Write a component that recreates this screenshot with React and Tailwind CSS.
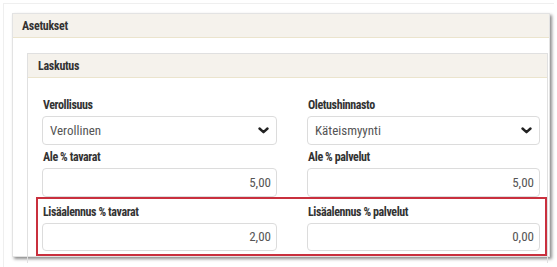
import React from 'react';

const font = '[font-family:"Roboto_Condensed","DejaVu_Sans_Condensed","Liberation_Sans_Narrow",Roboto,sans-serif]';

const Chevron = () => (
  <svg width="11" height="7" viewBox="0 0 11 7" className="shrink-0">
    <path d="M1.5 1.5 L5.5 5.2 L9.5 1.5" fill="none" stroke="#222" strokeWidth="2.4" strokeLinecap="round" strokeLinejoin="round" />
  </svg>
);

const Label = ({ children }) => (
  <div className="h-[16px] leading-[16px] text-[12px] font-bold text-[#333] pl-[1px] mb-[3px] tracking-[-0.4px] [font-stretch:condensed]">{children}</div>
);

const Select = ({ value }) => (
  <div className="h-[29px] border border-[#dcdcdc] rounded-[4px] bg-white flex items-center justify-between pl-[7px] pr-[7px] text-[13px] text-[#555] [font-stretch:condensed]">
    <span>{value}</span>
    <Chevron />
  </div>
);

const Input = ({ value, h = 'h-[29px]' }) => (
  <div className={`${h} border border-[#dcdcdc] rounded-[4px] bg-white flex items-center justify-end pr-[5px] text-[13px] text-[#555] [font-stretch:condensed]`}>
    {value}
  </div>
);

export default function App() {
  return (
    <div className={`w-[557px] h-[267px] bg-white overflow-hidden pt-[3px] pl-[3px] ${font}`}>
      <div className="w-[551px] h-[264px] border-l border-t border-[#efefef] pl-[8px] pt-[9px]">
        <div className="w-[538px] h-[244px] bg-white border border-[#e3e3e3] shadow-[2px_2px_3px_rgba(0,0,0,0.45)]">
          <div className="h-[24px] bg-[#f5f2ec] border-b border-[#ebe4cd] pl-[9px] flex items-center text-[12px] font-bold text-[#333] tracking-[-0.3px] [font-stretch:condensed]">
            Asetukset
          </div>
          <div className="pl-[14px] pt-[15px] pr-[1px]">
            <div className="h-[210px] border border-[#e0e0e0] border-b-0">
              <div className="h-[24px] bg-[#f5f2ec] border-b border-[#ebe4cd] pl-[10px] flex items-center text-[12px] font-bold text-[#333] tracking-[-0.3px] [font-stretch:condensed]">
                Laskutus
              </div>
              <div className="pl-[14px] pt-[19px]">
                <div className="grid grid-cols-[235px_233px] gap-x-[30px]">
                  <div>
                    <Label>Verollisuus</Label>
                    <Select value="Verollinen" />
                  </div>
                  <div>
                    <Label>Oletushinnasto</Label>
                    <Select value="Käteismyynti" />
                  </div>
                </div>
                <div className="grid grid-cols-[235px_233px] gap-x-[30px] mt-[4px]">
                  <div>
                    <Label>Ale % tavarat</Label>
                    <Input value="5,00" />
                  </div>
                  <div>
                    <Label>Ale % palvelut</Label>
                    <Input value="5,00" />
                  </div>
                </div>
                <div className="w-[511px] -ml-[6px] border-2 border-[#c9303e] pl-[4px] pt-[5px] pb-[3px]">
                  <div className="grid grid-cols-[235px_233px] gap-x-[30px]">
                    <div>
                      <Label>Lisäalennus % tavarat</Label>
                      <Input value="2,00" h="h-[28px]" />
                    </div>
                    <div>
                      <Label>Lisäalennus % palvelut</Label>
                      <Input value="0,00" h="h-[28px]" />
                    </div>
                  </div>
                </div>
              </div>
            </div>
          </div>
        </div>
      </div>
    </div>
  );
}
